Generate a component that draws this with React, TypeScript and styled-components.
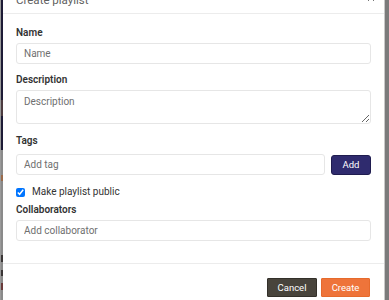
import React from 'react'
import styled, { createGlobalStyle } from 'styled-components'

const GlobalStyle = createGlobalStyle`
    html, body {
        margin: 0;
        padding: 0;
    }
    body {
        font-family: Roboto, "Liberation Sans", Arial, sans-serif;
        background: #ffffff;
        overflow: hidden;
    }
`

const Backdrop = styled.div`
    position: fixed;
    inset: 0;
    display: flex;
    align-items: flex-start;
    background: #7f7f7f;
    overflow: hidden;
`

const PageEdge = styled.div`
    width: 2px;
    height: 100%;
    flex: none;
    border-left: 1px solid #9a9a9a;
    background: linear-gradient(
        to bottom,
        #1d1b36 0 100px,
        #4c3b3f 100px 116px,
        #1d1b36 116px 150px,
        #8a8a8a 150px 175px,
        #9a6a4a 175px 181px,
        #8a8a8a 181px 255px,
        #3a3636 255px 262px,
        #8a8a8a 262px 270px,
        #3a3636 270px 276px,
        #8a8a8a 276px 283px,
        #6a3a3a 283px 290px,
        #8a8a8a 290px
    );
`

const ScrollEdge = styled.div`
    flex: 1;
    height: 100%;
    border-left: 1px solid #c9c9c9;
    background: #7b7b7b;
`

const Modal = styled.div`
    width: 381px;
    flex: none;
    margin-top: -18px;
    background: #ffffff;
    display: flex;
    flex-direction: column;
`

const Header = styled.div`
    height: 32px;
    box-sizing: border-box;
    padding: 0 9px 6px 13px;
    display: flex;
    align-items: flex-end;
    justify-content: space-between;
    border-bottom: 1px solid #ececec;
`

const Title = styled.div`
    font-size: 11.5px;
    line-height: 14px;
    color: #5f5f5f;
`

const Close = styled.button`
    border: none;
    background: none;
    padding: 0;
    margin-bottom: 5px;
    color: #777;
    display: flex;
    cursor: pointer;
`

const Body = styled.div`
    padding: 13px 13px 22px;
    display: flex;
    flex-direction: column;
`

const Field = styled.div<{ $gap?: number; $after?: number }>`
    display: flex;
    flex-direction: column;
    gap: ${({ $gap }) => $gap ?? 3}px;
    margin-bottom: ${({ $after }) => $after ?? 11}px;
`

const Label = styled.label`
    font-size: 10px;
    line-height: 12px;
    font-weight: 600;
    color: #333333;
`

const inputCss = `
    box-sizing: border-box;
    width: 100%;
    border: 1px solid #e6e6e6;
    border-radius: 3px;
    background: #fff;
    font-family: Roboto, "Liberation Sans", Arial, sans-serif;
    font-size: 10px;
    color: #333;
    padding: 0 7px;
    outline: none;
    &::placeholder {
        color: #6f6f6f;
    }
`

const Input = styled.input`
    ${inputCss}
    height: 21px;
`

const TextArea = styled.textarea`
    ${inputCss}
    height: 34px;
    padding-top: 5px;
    resize: vertical;
    display: block;
`

const TagRow = styled.div`
    display: flex;
    align-items: center;
    gap: 6px;
`

const AddButton = styled.button`
    flex: none;
    width: 40px;
    height: 20px;
    border: 1px solid #1f1c4f;
    border-radius: 3px;
    background: #2f2b6e;
    color: #fff;
    font-family: inherit;
    font-size: 9.5px;
    padding: 0;
    cursor: pointer;
`

const CheckRow = styled.label`
    display: flex;
    align-items: center;
    gap: 7px;
    font-size: 10px;
    line-height: 12px;
    color: #333;
    margin-bottom: 6px;
`

const Check = styled.input`
    width: 9px;
    height: 9px;
    margin: 0;
`

const Footer = styled.div`
    border-top: 1px solid #ececec;
    padding: 14px;
    display: flex;
    justify-content: flex-end;
    gap: 4px;
`

const FooterButton = styled.button<{ $variant: 'cancel' | 'create' }>`
    height: 19px;
    width: ${({ $variant }) => ($variant === 'cancel' ? 50 : 49)}px;
    border: 1px solid ${({ $variant }) => ($variant === 'cancel' ? '#33302a' : '#e66a2c')};
    background: ${({ $variant }) => ($variant === 'cancel' ? '#48443c' : '#ee743a')};
    color: #fff;
    font-family: inherit;
    font-size: 9.5px;
    line-height: 17px;
    padding: 0;
    border-radius: 1px;
    cursor: pointer;
`

export default function App() {
    return (
        <>
            <GlobalStyle />
            <Backdrop>
                <PageEdge />
                <Modal>
                    <Header>
                        <Title>Create playlist</Title>
                        <Close aria-label="Close">
                            <svg width="8" height="8" viewBox="0 0 8 8">
                                <path d="M1 1 L7 7 M7 1 L1 7" stroke="#777" strokeWidth="1" />
                            </svg>
                        </Close>
                    </Header>
                    <Body>
                        <Field $gap={4} $after={10}>
                            <Label>Name</Label>
                            <Input placeholder="Name" />
                        </Field>
                        <Field $gap={4}>
                            <Label>Description</Label>
                            <TextArea placeholder="Description" />
                        </Field>
                        <Field $gap={7} $after={11}>
                            <Label>Tags</Label>
                            <TagRow>
                                <Input placeholder="Add tag" />
                                <AddButton>Add</AddButton>
                            </TagRow>
                        </Field>
                        <CheckRow>
                            <Check type="checkbox" defaultChecked />
                            Make playlist public
                        </CheckRow>
                        <Field $gap={4} $after={0}>
                            <Label>Collaborators</Label>
                            <Input placeholder="Add collaborator" />
                        </Field>
                    </Body>
                    <Footer>
                        <FooterButton $variant="cancel">Cancel</FooterButton>
                        <FooterButton $variant="create">Create</FooterButton>
                    </Footer>
                </Modal>
                <ScrollEdge />
            </Backdrop>
        </>
    )
}
